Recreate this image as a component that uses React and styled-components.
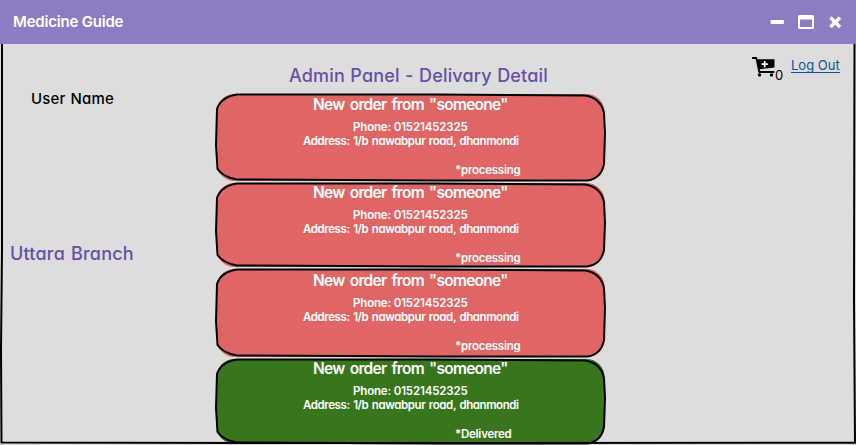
import React from "react";
import styled, { createGlobalStyle } from "styled-components";

const GlobalStyle = createGlobalStyle`
  * { box-sizing: border-box; }
  body { margin: 0; background: #dddddd; overflow: hidden; }
`;

const Window = styled.div`
  position: relative;
  width: 856px;
  height: 445px;
  overflow: hidden;
  background: #dddddd;
  color: #000;
  font-family: Inter, "Noto Sans", sans-serif;
  font-feature-settings: "cv11" 1;
`;

const TitleBar = styled.header`
  display: flex;
  align-items: center;
  justify-content: space-between;
  height: 44px;
  padding: 0 14px 0 13px;
  background: #8e7cc3;
  color: #fff;
`;

const Label = styled.span`
  display: block;
  white-space: nowrap;
  font-size: ${(p) => p.$size}px;
  line-height: ${(p) => p.$line || 20}px;
  font-weight: ${(p) => p.$weight || 400};
  letter-spacing: ${(p) => p.$track || 0}px;
  word-spacing: ${(p) => p.$word || 0}px;
  color: ${(p) => p.$color || "inherit"};
`;

const Controls = styled.svg`
  display: block;
  width: 72px;
  height: 20px;
`;

const Content = styled.main`
  display: grid;
  grid-template-columns: 215px 391px 1fr;
  height: 401px;
`;

const Side = styled.aside`
  display: flex;
  flex-direction: column;
  gap: 135px;
  padding-top: 45px;
`;

const UserName = styled.div`
  padding-left: 31px;
`;

const Branch = styled.div`
  padding-left: 10px;
`;

const Orders = styled.section`
  display: flex;
  flex-direction: column;
`;

const Heading = styled.h1`
  margin: 0;
  height: 49px;
  padding: 20px 0 0 74px;
`;

const Card = styled.article`
  position: relative;
  flex: none;
  height: ${(p) => p.$height}px;
  margin-bottom: 1px;
  padding-top: ${(p) => p.$inset}px;
  color: #fff;
`;

const Outline = styled.svg`
  position: absolute;
  inset: 0;
  overflow: visible;
`;

const CardText = styled.div`
  position: relative;
  display: flex;
  flex-direction: column;
`;

const Line = styled.div`
  padding-left: ${(p) => p.$left}px;
  margin-top: ${(p) => p.$gap || 0}px;
`;

const Account = styled.div`
  display: flex;
  align-items: flex-start;
  padding: 12px 0 0 146px;
`;

const Cart = styled.svg`
  width: 24px;
  height: 22px;
`;

const Count = styled.div`
  margin: 10px 0 0 -1px;
  width: 16px;
`;

const LogOut = styled.a`
  height: 17px;
  border-bottom: 1px solid #0b5394;
  color: #0b5394;
`;

const Frame = styled.svg`
  position: absolute;
  inset: 0;
  pointer-events: none;
`;

const orders = [
  { h: 88, inset: 2, fill: "#e06666", status: "*processing" },
  { h: 85, inset: 1, fill: "#e06666", status: "*processing" },
  { h: 89, inset: 3, fill: "#e06666", status: "*processing" },
  { h: 86, inset: 1, fill: "#38761d", status: "*Delivered" },
];

function Order({ h, inset, fill, status }) {
  return (
    <Card $height={h} $inset={inset}>
      <Outline width="391" height={h}>
        <rect x="1.5" y="1" width="388" height={h - 1} rx="18" fill={fill} />
        <path
          d={`M22 1.5 L220 1.5 L370 2.5 Q386 5 389 20 L390 40 L389 ${h - 17} Q386 ${h - 2} 372 ${h - 0.5} L220 ${h - 0.5} L22 ${h - 1.5} Q8 ${h - 4} 2.5 ${h - 12} L1 ${h - 36} L2 16 Q6 4 22 1.5 Z`}
          fill="none"
          stroke="#000"
          strokeWidth="2"
          strokeLinejoin="round"
        />
      </Outline>
      <CardText>
        <Line $left={98}><Label $size={15.5} $weight={600} $track={-0.72} $word={2}>New order from "someone"</Label></Line>
        <Line $left={138} $gap={5}><Label $size={11.5} $line={14} $weight={600} $track={-0.16}>Phone: 01521452325</Label></Line>
        <Line $left={88}><Label $size={11.5} $line={14} $weight={600} $track={-0.41} $word={1}>Address: 1/b nawabpur road, dhanmondi</Label></Line>
        <Line $left={240} $gap={15}><Label $size={11.5} $line={14} $weight={600} $track={-0.24}>{status}</Label></Line>
      </CardText>
    </Card>
  );
}

export default function App() {
  return (
    <>
      <GlobalStyle />
      <Window>
        <TitleBar>
          <Label $size={15} $weight={600} $track={-0.2}>Medicine Guide</Label>
          <Controls viewBox="770 12 72 20">
            <rect x="770.5" y="20" width="13.5" height="4" rx="1" fill="#fff" />
            <path fillRule="evenodd" fill="#fff" d="M799.5 15h13q1.5 0 1.5 1.5v11q0 1.5-1.5 1.5h-13q-1.5 0-1.5-1.5v-11q0-1.5 1.5-1.5zM800 19.5v7.5h12v-7.5z" />
            <path d="M831.2 18.2l8 8M839.2 18.2l-8 8" stroke="#fff" strokeWidth="4" strokeLinecap="square" transform="translate(835.2 22.2) scale(.88) translate(-835.2 -22.2)" />
          </Controls>
        </TitleBar>
        <Content>
          <Side>
            <UserName><Label $size={15} $weight={500} $track={0.16} $word={1}>User Name</Label></UserName>
            <Branch><Label $size={18} $weight={500} $track={0.2} $word={1} $color="#674ea7">Uttara Branch</Label></Branch>
          </Side>
          <Orders>
            <Heading><Label $size={18} $line={24} $weight={500} $track={0.16} $word={0.5} $color="#674ea7">Admin Panel - Delivary Detail</Label></Heading>
            {orders.map((o, i) => <Order key={i} {...o} />)}
          </Orders>
          <Account>
            <Cart viewBox="0 0 24 22">
              <path d="M0 2h4.3l3 14h15" fill="none" stroke="#000" strokeWidth="1.8" strokeLinejoin="round" />
              <path d="M4.5 3.2h18v8.3L6.5 13.5z" fill="#000" />
              <path d="M12.7 5v6.4M9.5 8.2h6.4" stroke="#fff" strokeWidth="1.7" />
              <circle cx="7.5" cy="19" r="1.7" />
              <circle cx="19.5" cy="19" r="1.7" />
            </Cart>
            <Count><Label $size={13} $line={18}>0</Label></Count>
            <LogOut><Label $size={13} $line={18}>Log Out</Label></LogOut>
          </Account>
        </Content>
        <Frame width="856" height="445">
          <path d="M2 44 L2 250 L1 350 L1.5 442.5 L300 443 L855 442.8 L854 300 L854.5 44" fill="none" stroke="#000" strokeWidth="2" />
        </Frame>
      </Window>
    </>
  );
}
